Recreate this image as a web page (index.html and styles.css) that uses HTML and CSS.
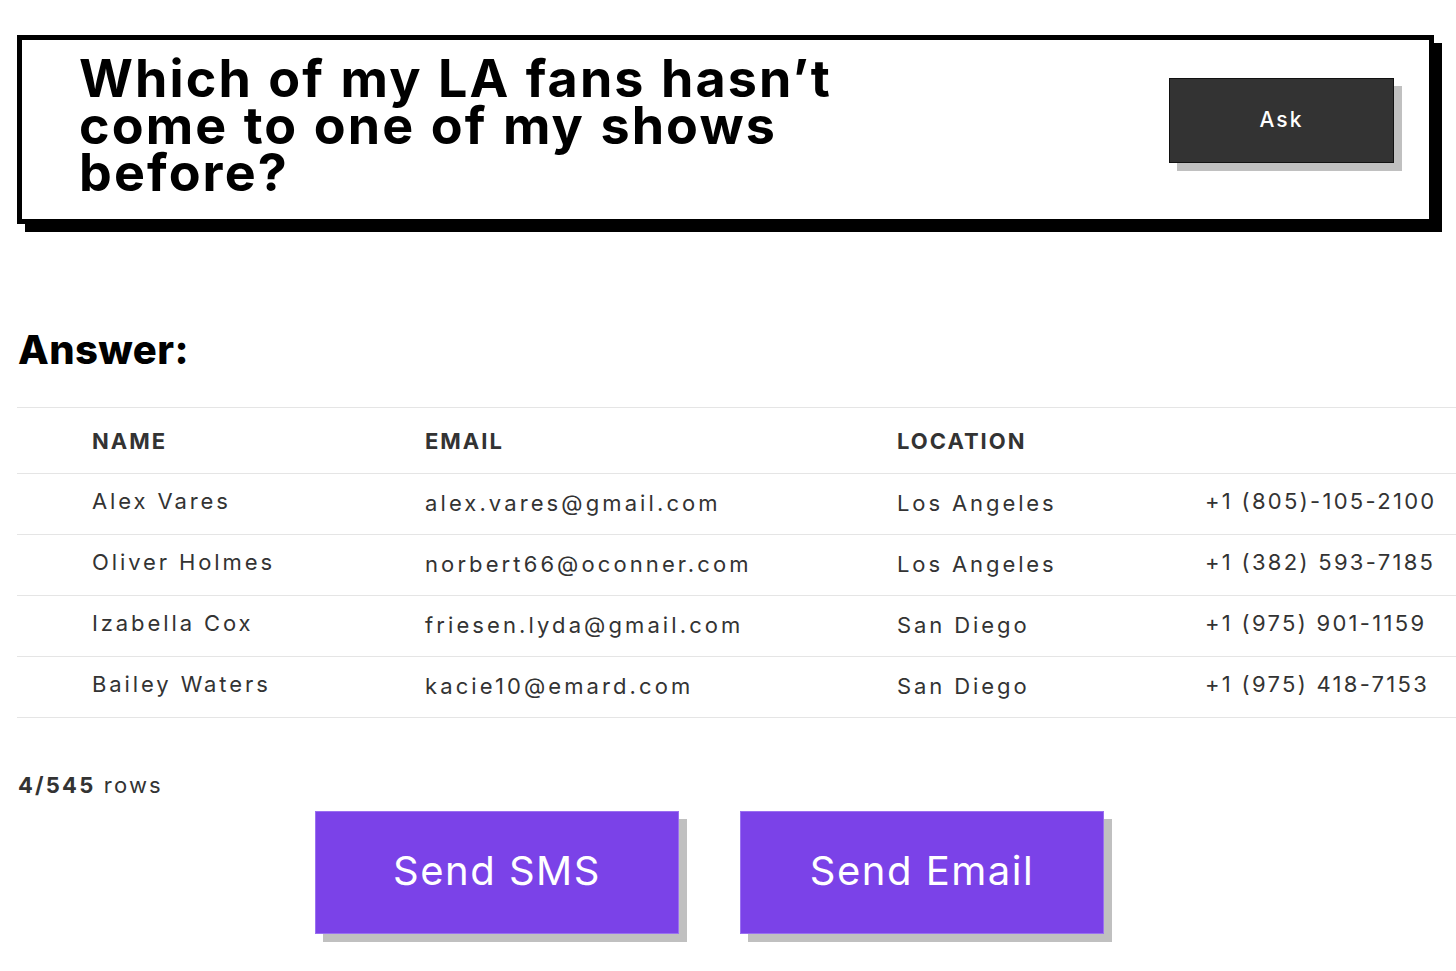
FILE: index.html
```html
<!DOCTYPE html>
<html lang="en">
<head>
    <meta charset="UTF-8">
    <meta name="viewport" content="width=device-width, initial-scale=1.0">
    <title>Ask your fans</title>
    <link rel="stylesheet" href="styles.css">
</head>
<body>
    <form class="question" id="questionForm">
        <h1 class="question-text">Which of my LA fans hasn’t come to one of my shows before?</h1>
        <button type="submit" class="ask-btn">Ask</button>
    </form>

    <h2 class="answer-title">Answer:</h2>

    <table class="results">
        <colgroup>
            <col class="col-name">
            <col class="col-email">
            <col class="col-location">
            <col class="col-phone">
        </colgroup>
        <thead>
            <tr>
                <th>Name</th>
                <th>Email</th>
                <th>Location</th>
                <th></th>
            </tr>
        </thead>
        <tbody>
            <tr>
                <td>Alex Vares</td>
                <td class="email">alex.vares@gmail.com</td>
                <td class="location">Los Angeles</td>
                <td class="phone">+1 (805)-105-2100</td>
            </tr>
            <tr>
                <td>Oliver Holmes</td>
                <td class="email">norbert66@oconner.com</td>
                <td class="location">Los Angeles</td>
                <td class="phone">+1 (382) 593-7185</td>
            </tr>
            <tr>
                <td>Izabella Cox</td>
                <td class="email">friesen.lyda@gmail.com</td>
                <td class="location">San Diego</td>
                <td class="phone">+1 (975) 901-1159</td>
            </tr>
            <tr>
                <td>Bailey Waters</td>
                <td class="email">kacie10@emard.com</td>
                <td class="location">San Diego</td>
                <td class="phone">+1 (975) 418-7153</td>
            </tr>
        </tbody>
    </table>

    <p class="row-count"><strong>4/545</strong> rows</p>

    <div class="actions">
        <button type="button" class="action-btn">Send SMS</button>
        <button type="button" class="action-btn">Send Email</button>
    </div>
</body>
</html>
```

FILE: styles.css
```css
body {
    font-family: Inter, "Liberation Sans", sans-serif;
    margin: 0;
    padding: 0 0 30px;
    background-color: #fff;
    color: #000;
}

.question {
    display: flex;
    justify-content: space-between;
    align-items: flex-start;
    margin: 35px 22px 0 17px;
    padding: 15px 35px 23px 57px;
    border: 5px solid #000;
    box-shadow: 8px 8px 0 #000;
}

.question-text {
    margin: 0;
    max-width: 800px;
    font-size: 52px;
    font-weight: 700;
    line-height: 47px;
    letter-spacing: 2.1px;
    word-spacing: 1px;
}

.ask-btn {
    margin-top: 23px;
    width: 225px;
    height: 85px;
    padding-bottom: 4px;
    background-color: #333;
    color: #fff;
    border: 1px solid #111;
    font-family: Inter, sans-serif;
    font-size: 21px;
    font-weight: 500;
    letter-spacing: 2px;
    box-shadow: 8px 8px 0 #c0c0c0;
    cursor: pointer;
}

.answer-title {
    margin: 102px 0 0 18px;
    font-size: 40px;
    font-weight: 800;
    line-height: 48px;
    letter-spacing: 0.4px;
}

.results {
    margin: 33px 0 0 17px;
    width: 1439px;
    table-layout: fixed;
    border-collapse: collapse;
    border-top: 1px solid #e5e5e5;
    color: #333;
    font-size: 22px;
    letter-spacing: 2.9px;
}

.col-name { width: 408px; }
.col-email { width: 472px; }
.col-location { width: 308px; }
.col-phone { width: 251px; }

.results th,
.results td {
    padding: 0;
    text-align: left;
    vertical-align: middle;
    border-bottom: 1px solid #e5e5e5;
    white-space: nowrap;
}

.results th:first-child,
.results td:first-child {
    padding-left: 75px;
}

.results th {
    height: 65px;
    font-weight: 700;
    letter-spacing: 2px;
    text-transform: uppercase;
}

.results td {
    height: 54px;
    padding-bottom: 6px;
}

.results .email,
.results .location {
    height: 58px;
    padding-bottom: 2px;
}

.results .email {
    letter-spacing: 3.1px;
}

.results .phone {
    letter-spacing: 2.3px;
}

.row-count {
    margin: 52px 0 0 18px;
    font-size: 22px;
    line-height: 30px;
    letter-spacing: 2.2px;
    color: #333;
}

.actions {
    display: flex;
    gap: 61px;
    margin: 11px 0 0 315px;
}

.action-btn {
    width: 364px;
    height: 123px;
    padding-bottom: 6px;
    background-color: #7b42e8;
    color: #fff;
    border: 1px solid #9a70f0;
    font-family: Inter, sans-serif;
    font-size: 40px;
    font-weight: 400;
    letter-spacing: 1.5px;
    box-shadow: 8px 8px 0 #c0c0c0;
    cursor: pointer;
}
```
